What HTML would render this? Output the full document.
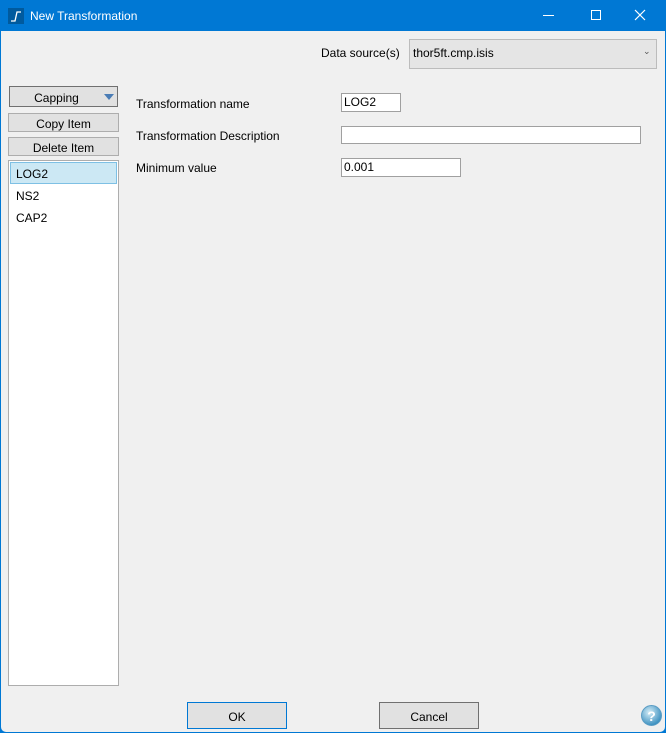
<!DOCTYPE html>
<html><head><style>
*{box-sizing:border-box;margin:0;padding:0}
body{width:666px;height:733px;overflow:hidden;font-family:"Liberation Sans",sans-serif;font-size:12px;color:#000;background:#0078d4}
.win{position:absolute;left:0;top:0;width:666px;height:733px;border:1px solid #0078d4;border-top:none;background:#f0f0f0;border-radius:0 0 6px 6px}
.title{position:absolute;left:0;top:0;width:666px;height:31px;background:#0078d4;color:#fff;font-size:12px}
.a{position:absolute}
.btn{position:absolute;background:#e1e1e1;border:1px solid #adadad;text-align:center;font-size:12px}
.inp{position:absolute;background:#fff;border:1px solid #7a7a7a;border-color:#a0a0a0;padding-left:2px;font-size:12px;line-height:16px}
</style></head><body>
<div class="win"></div>
<div class="title">
<svg class="a" style="left:8px;top:8px" width="16" height="16"><rect x="0" y="0" width="16" height="16" fill="#005a9e"/><path d="M3 13 L7 13 L9 4 L13 4" stroke="#fff" stroke-width="1.3" fill="none"/></svg>
<div class="a" style="left:30px;top:9px">New Transformation</div>
<div class="a" style="left:543px;top:15px;width:11px;height:1px;background:#fff"></div>
<div class="a" style="left:591px;top:10px;width:10px;height:10px;border:1px solid #fff"></div>
<svg class="a" style="left:634px;top:9px" width="12" height="12"><path d="M1 1L11 11M11 1L1 11" stroke="#fff" stroke-width="1.2"/></svg>
</div>
<div class="a" style="left:321px;top:46px">Data source(s)</div>
<div class="a" style="left:409px;top:39px;width:248px;height:30px;background:#e5e5e5;border:1px solid #bcbcbc;padding:6px 0 0 3px">thor5ft.cmp.isis</div>
<div class="a" style="left:643px;top:46px;font-size:9px;color:#555">&#8964;</div>
<div class="btn" style="left:9px;top:86px;width:109px;height:21px;border-color:#707070;padding-top:4px;padding-right:14px">Capping</div>
<svg class="a" style="left:104px;top:94px" width="10" height="6"><path d="M0 0H10L5 6Z" fill="#4a7cb5"/></svg>
<div class="btn" style="left:8px;top:113px;width:111px;height:19px;padding-top:3px">Copy Item</div>
<div class="btn" style="left:8px;top:137px;width:111px;height:19px;padding-top:3px">Delete Item</div>
<div class="a" style="left:8px;top:160px;width:111px;height:526px;background:#fff;border:1px solid #adadad"></div>
<div class="a" style="left:10px;top:162px;width:107px;height:22px;background:#cce8f4;border:1px solid #7ec0e4;padding:4px 0 0 5px">LOG2</div>
<div class="a" style="left:16px;top:189px">NS2</div>
<div class="a" style="left:16px;top:211px">CAP2</div>
<div class="a" style="left:136px;top:97px">Transformation name</div>
<div class="a" style="left:136px;top:129px">Transformation Description</div>
<div class="a" style="left:136px;top:161px">Minimum value</div>
<div class="inp" style="left:341px;top:93px;width:60px;height:19px">LOG2</div>
<div class="inp" style="left:341px;top:126px;width:300px;height:18px"></div>
<div class="inp" style="left:341px;top:158px;width:120px;height:19px">0.001</div>
<div class="btn" style="left:187px;top:702px;width:100px;height:27px;border-color:#0078d4;padding-top:7px">OK</div>
<div class="btn" style="left:379px;top:702px;width:100px;height:27px;border-color:#707070;padding-top:7px">Cancel</div>
<svg class="a" style="left:641px;top:705px" width="21" height="21"><defs><radialGradient id="g" cx="40%" cy="35%" r="65%"><stop offset="0" stop-color="#d6eef8"/><stop offset="1" stop-color="#3a8fbf"/></radialGradient></defs><circle cx="10.5" cy="10.5" r="10" fill="url(#g)" stroke="#5a9cc4"/><text x="10.5" y="16" font-size="14" font-weight="bold" text-anchor="middle" fill="#fff" font-family="Liberation Sans">?</text></svg>
</body></html>
